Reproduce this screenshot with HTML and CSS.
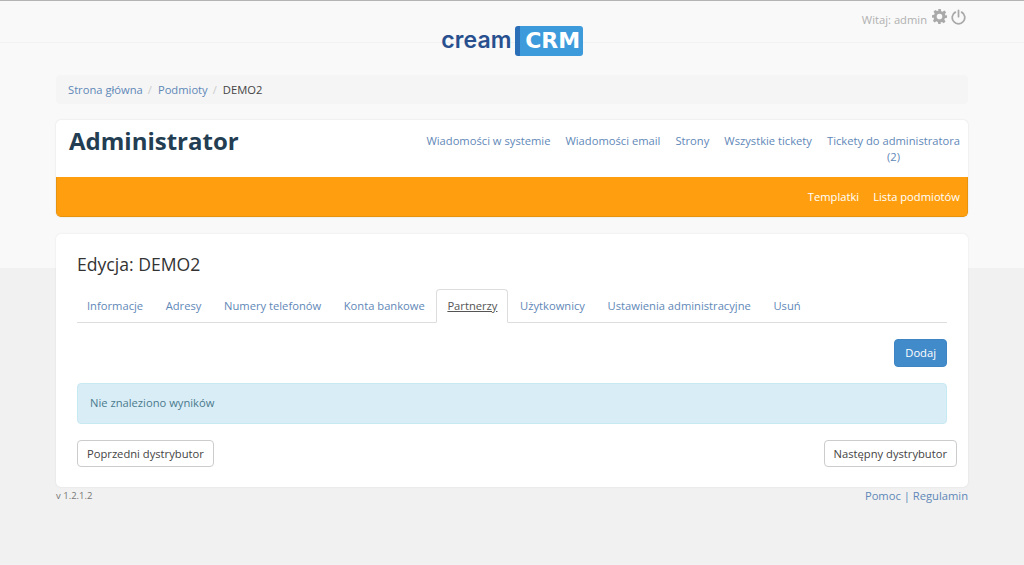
FILE: index.html
```html
<!DOCTYPE html>
<html lang="en">
<head>
  <meta charset="UTF-8">
  <meta name="viewport" content="width=device-width, initial-scale=1.0">
  <title>cream CRM</title>
  <link rel="stylesheet" href="styles.css">
</head>
<body>
  <header class="topbar">
    <div class="wrap topbar-inner">
      <div></div>
      <a class="logo" href="#">
        <span class="logo-cream">cream</span>
        <span class="logo-crm">CRM</span>
      </a>
      <div class="user">
        <span>Witaj: admin</span>
        <svg class="icon-gear" width="15" height="15" viewBox="0 0 24 24">
          <path fill="#a9a9a9" fill-rule="evenodd" d="M10 0h4l.7 3.4 2.2.9 2.9-1.9 2.8 2.8-1.9 2.9.9 2.2L24 10v4l-3.4.7-.9 2.2 1.9 2.9-2.8 2.8-2.9-1.9-2.2.9L14 24h-4l-.7-3.4-2.2-.9-2.9 1.9-2.8-2.8 1.9-2.9-.9-2.2L0 14v-4l3.4-.7.9-2.2-1.9-2.9 2.8-2.8 2.9 1.9 2.2-.9zM12 7.5a4.5 4.5 0 1 0 0 9 4.5 4.5 0 0 0 0-9z"/>
        </svg>
        <svg class="icon-power" width="15" height="16" viewBox="0 0 24 24">
          <path fill="none" stroke="#a9a9a9" stroke-width="2.8" stroke-linecap="round" d="M7 4.2a10 10 0 1 0 10 0M12 1.5v10"/>
        </svg>
      </div>
    </div>
  </header>

  <div class="wrap">
    <ol class="breadcrumb">
      <li><a href="#">Strona główna</a></li>
      <li><a href="#">Podmioty</a></li>
      <li class="current">DEMO2</li>
    </ol>

    <section class="panel-head">
      <div class="panel-title">
        <h1>Administrator</h1>
        <nav class="main-links">
          <a href="#">Wiadomości w systemie</a>
          <a href="#">Wiadomości email</a>
          <a href="#">Strony</a>
          <a href="#">Wszystkie tickety</a>
          <a class="wrap-link" href="#">Tickety do administratora<br>(2)</a>
        </nav>
      </div>
      <nav class="orange-bar">
        <a href="#">Templatki</a>
        <a href="#">Lista podmiotów</a>
      </nav>
    </section>

    <main class="card">
      <h2>Edycja: DEMO2</h2>
      <ul class="tabs">
        <li><a href="#">Informacje</a></li>
        <li><a href="#">Adresy</a></li>
        <li><a href="#">Numery telefonów</a></li>
        <li><a href="#">Konta bankowe</a></li>
        <li class="active"><a href="#">Partnerzy</a></li>
        <li><a href="#">Użytkownicy</a></li>
        <li><a href="#">Ustawienia administracyjne</a></li>
        <li><a href="#">Usuń</a></li>
      </ul>
      <div class="actions">
        <button class="btn btn-primary">Dodaj</button>
      </div>
      <div class="alert">Nie znaleziono wyników</div>
      <div class="pager">
        <button class="btn">Poprzedni dystrybutor</button>
        <button class="btn">Następny dystrybutor</button>
      </div>
    </main>

    <footer class="footer">
      <span class="version">v 1.2.1.2</span>
      <span class="footer-links"><a href="#">Pomoc</a> | <a href="#">Regulamin</a></span>
    </footer>
  </div>
</body>
</html>
```

FILE: styles.css
```css
* {
  box-sizing: border-box;
}

body {
  margin: 0;
  height: 565px;
  overflow: hidden;
  font-family: "Open Sans", sans-serif;
  font-size: 11.2px;
  line-height: 17px;
  color: #555;
  background: linear-gradient(#f9f9f9 0, #f9f9f9 268px, #f1f1f1 268px);
}

a {
  color: #5f88b8;
  text-decoration: none;
}

.wrap {
  width: 912px;
  margin: 0 auto;
}

.topbar {
  height: 43px;
  border-top: 1px solid #b4b4b4;
  border-bottom: 1px solid #f1f1f1;
}

.topbar-inner {
  display: grid;
  grid-template-columns: 1fr auto 1fr;
}

.logo {
  display: flex;
  align-items: center;
  gap: 3px;
  height: 30px;
  margin-top: 25px;
}

.logo-cream {
  font-family: "Inter", sans-serif;
  font-size: 23px;
  font-weight: 600;
  letter-spacing: 0.1px;
  color: #28508f;
  padding-bottom: 2px;
}

.logo-crm {
  width: 68px;
  height: 30px;
  padding-left: 3px;
  border-radius: 3px;
  border-left: 5px solid #2a6fb8;
  background: #3d9bdc;
  color: #fff;
  font-family: "DejaVu Sans", sans-serif;
  font-size: 22px;
  font-weight: 700;
  line-height: 29px;
  text-align: center;
}

.user {
  display: flex;
  justify-content: flex-end;
  align-items: flex-start;
  gap: 5px;
  padding: 8px 2px 0 0;
  color: #b0b0b0;
}

.user span {
  margin-top: 2px;
}

.icon-power {
  margin-left: -1px;
}

.breadcrumb {
  display: flex;
  height: 29px;
  margin: 32px 0 16px;
  padding: 6px 12px;
  list-style: none;
  border-radius: 4px;
  background: #f5f5f5;
}

.breadcrumb li + li::before {
  content: "/";
  padding: 0 6px 0 5px;
  color: #ccc;
}

.breadcrumb .current {
  color: #444;
}

.panel-head {
  height: 97px;
  border-radius: 5px;
  background: #fff;
  box-shadow: 0 0 2px rgba(0, 0, 0, 0.12);
}

.panel-title {
  display: flex;
  justify-content: space-between;
  height: 57px;
  padding: 0 8px 0 13px;
}

h1 {
  margin: 4px 0 0;
  font-size: 24px;
  line-height: 33px;
  font-weight: 700;
  color: #233d52;
}

.main-links {
  display: flex;
  align-items: flex-start;
  gap: 15px;
  padding-top: 13px;
  line-height: 16px;
}

.wrap-link {
  text-align: center;
}

.orange-bar {
  display: flex;
  justify-content: flex-end;
  gap: 14px;
  height: 40px;
  padding: 11px 7px 0;
  border: 1px solid #e8930e;
  border-top: 0;
  border-radius: 0 0 5px 5px;
  background: #ff9f10;
}

.orange-bar a {
  color: #fff;
}

.card {
  height: 253px;
  margin-top: 17px;
  padding: 18px 21px 0 21px;
  border-radius: 5px;
  background: #fff;
  box-shadow: 0 0 2px rgba(0, 0, 0, 0.1);
}

h2 {
  margin: 0;
  font-size: 17.6px;
  line-height: 25px;
  font-weight: 400;
  color: #333;
}

.tabs {
  display: flex;
  height: 34px;
  margin: 12px 0 0;
  padding: 0;
  list-style: none;
  border-bottom: 1px solid #ddd;
}

.tabs li {
  margin-right: 0.6px;
}

.tabs li:first-child {
  margin-left: -1px;
}

.tabs a {
  display: block;
  height: 34px;
  padding: 7px 10px;
  border: 1px solid transparent;
  border-radius: 4px 4px 0 0;
}

.tabs .active a {
  color: #555;
  text-decoration: underline;
  background: #fff;
  border-color: #ddd #ddd #fff;
}

.actions {
  display: flex;
  justify-content: flex-end;
  margin-top: 16px;
}

.btn {
  height: 27px;
  padding: 0 9px;
  border: 1px solid #ccc;
  border-radius: 4px;
  background: #fff;
  color: #444;
  font: inherit;
}

.btn-primary {
  height: 28px;
  padding: 0 10px 1px;
  border-color: #3f85c3;
  background: #428bca;
  color: #fff;
}

.alert {
  height: 41px;
  margin-top: 16px;
  padding: 10px 12px;
  border: 1px solid #c6e9f2;
  border-radius: 4px;
  background: #d9edf7;
  color: #4a7a8c;
}

.pager {
  display: flex;
  justify-content: space-between;
  margin: 16px -10px 0 0;
}

.footer {
  display: flex;
  justify-content: space-between;
}

.version {
  font-size: 9.5px;
  color: #777;
}

.footer-links {
  color: #5f88b8;
}
```
